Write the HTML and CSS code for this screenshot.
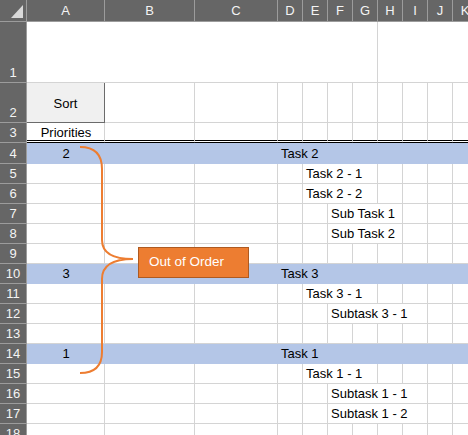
FILE: index.html
```html
<!DOCTYPE html>
<html lang="en">
<head>
  <meta charset="UTF-8" />
  <title>Priorities</title>
  <link rel="stylesheet" href="styles.css">
</head>
<body>
  <div class="sheet">
    <!-- column headers -->
    <div class="c hd corner">
      <svg width="26" height="21" viewBox="0 0 26 21"><polygon points="11,18 23,18 23,5" fill="#d9d9d9"/></svg>
    </div>
    <div class="c hd">A</div>
    <div class="c hd">B</div>
    <div class="c hd">C</div>
    <div class="c hd">D</div>
    <div class="c hd">E</div>
    <div class="c hd">F</div>
    <div class="c hd">G</div>
    <div class="c hd">H</div>
    <div class="c hd">I</div>
    <div class="c hd">J</div>
    <div class="c hd">K</div>

    <!-- row 1 -->
    <div class="c rh">1</div>
    <div class="c span-7"></div>
    <div class="c span-4"></div>

    <!-- row 2 -->
    <div class="c rh">2</div>
    <div class="c btn-cell"><div class="btn">Sort</div></div>
    <div class="c"></div><div class="c"></div><div class="c"></div><div class="c"></div><div class="c"></div>
    <div class="c"></div><div class="c"></div><div class="c"></div><div class="c"></div><div class="c"></div>

    <!-- row 3 -->
    <div class="c rh">3</div>
    <div class="c dbl ctr">Priorities</div>
    <div class="c dbl"></div><div class="c dbl"></div><div class="c dbl"></div><div class="c dbl"></div><div class="c dbl"></div>
    <div class="c dbl"></div><div class="c dbl"></div><div class="c dbl"></div><div class="c dbl"></div><div class="c dbl"></div>

    <!-- row 4 -->
    <div class="c rh">4</div>
    <div class="c band ctr">2</div>
    <div class="c band"></div>
    <div class="c band"></div>
    <div class="c band span-8 task">Task 2</div>

    <!-- row 5 -->
    <div class="c rh">5</div>
    <div class="c"></div><div class="c"></div><div class="c"></div><div class="c"></div>
    <div class="c span-3">Task 2 - 1</div>
    <div class="c"></div><div class="c"></div><div class="c"></div><div class="c"></div>

    <!-- row 6 -->
    <div class="c rh">6</div>
    <div class="c"></div><div class="c"></div><div class="c"></div><div class="c"></div>
    <div class="c span-3">Task 2 - 2</div>
    <div class="c"></div><div class="c"></div><div class="c"></div><div class="c"></div>

    <!-- row 7 -->
    <div class="c rh">7</div>
    <div class="c"></div><div class="c"></div><div class="c"></div><div class="c"></div><div class="c"></div>
    <div class="c span-3">Sub Task 1</div>
    <div class="c"></div><div class="c"></div><div class="c"></div>

    <!-- row 8 -->
    <div class="c rh">8</div>
    <div class="c"></div><div class="c"></div><div class="c"></div><div class="c"></div><div class="c"></div>
    <div class="c span-3">Sub Task 2</div>
    <div class="c"></div><div class="c"></div><div class="c"></div>

    <!-- row 9 -->
    <div class="c rh">9</div>
    <div class="c"></div><div class="c"></div><div class="c"></div><div class="c"></div><div class="c"></div><div class="c"></div>
    <div class="c"></div><div class="c"></div><div class="c"></div><div class="c"></div><div class="c"></div>

    <!-- row 10 -->
    <div class="c rh">10</div>
    <div class="c band ctr">3</div>
    <div class="c band"></div>
    <div class="c band"></div>
    <div class="c band span-8 task">Task 3</div>

    <!-- row 11 -->
    <div class="c rh">11</div>
    <div class="c"></div><div class="c"></div><div class="c"></div><div class="c"></div>
    <div class="c span-3">Task 3 - 1</div>
    <div class="c"></div><div class="c"></div><div class="c"></div><div class="c"></div>

    <!-- row 12 -->
    <div class="c rh">12</div>
    <div class="c"></div><div class="c"></div><div class="c"></div><div class="c"></div><div class="c"></div>
    <div class="c span-4">Subtask 3 - 1</div>
    <div class="c"></div><div class="c"></div>

    <!-- row 13 -->
    <div class="c rh">13</div>
    <div class="c"></div><div class="c"></div><div class="c"></div><div class="c"></div><div class="c"></div><div class="c"></div>
    <div class="c"></div><div class="c"></div><div class="c"></div><div class="c"></div><div class="c"></div>

    <!-- row 14 -->
    <div class="c rh">14</div>
    <div class="c band ctr">1</div>
    <div class="c band"></div>
    <div class="c band"></div>
    <div class="c band span-8 task">Task 1</div>

    <!-- row 15 -->
    <div class="c rh">15</div>
    <div class="c"></div><div class="c"></div><div class="c"></div><div class="c"></div>
    <div class="c span-3">Task 1 - 1</div>
    <div class="c"></div><div class="c"></div><div class="c"></div><div class="c"></div>

    <!-- row 16 -->
    <div class="c rh">16</div>
    <div class="c"></div><div class="c"></div><div class="c"></div><div class="c"></div><div class="c"></div>
    <div class="c span-4">Subtask 1 - 1</div>
    <div class="c"></div><div class="c"></div>

    <!-- row 17 -->
    <div class="c rh">17</div>
    <div class="c"></div><div class="c"></div><div class="c"></div><div class="c"></div><div class="c"></div>
    <div class="c span-4">Subtask 1 - 2</div>
    <div class="c"></div><div class="c"></div>

    <!-- row 18 -->
    <div class="c rh">18</div>
    <div class="c"></div><div class="c"></div><div class="c"></div><div class="c"></div><div class="c"></div><div class="c"></div>
    <div class="c"></div><div class="c"></div><div class="c"></div><div class="c"></div><div class="c"></div>

    <!-- brace + callout drawn over the cells -->
    <svg class="brace" width="468" height="435" viewBox="0 0 468 435">
      <path d="M80 147 Q102 147 102 169 L102 240 Q102 259 133 259 Q102 259 102 279 L102 352 Q102 373 80 373"
            fill="none" stroke="#ed7d31" stroke-width="2"/>
    </svg>
    <div class="callout">Out of Order</div>
  </div>
</body>
</html>
```

FILE: styles.css
```css
body {
  margin: 0;
  overflow: hidden;
  background: #fff;
  font-family: "Liberation Sans", Arial, sans-serif;
  font-size: 13px;
  color: #000;
}
.sheet {
  position: relative;
  display: grid;
  grid-template-columns: 27px 78px 90px 83px repeat(8, 25px);
  grid-template-rows: 22px 61px 40px 20px 21px repeat(14, 20px);
  width: 478px;
}
.c {
  box-sizing: border-box;
  min-width: 0;
  display: flex;
  align-items: flex-end;
  padding: 0 2px 2px 3px;
  border-right: 1px solid #d4d4d4;
  border-bottom: 1px solid #d4d4d4;
  white-space: nowrap;
  line-height: 15px;
}
.hd {
  background: #666;
  color: #f4f4f4;
  border-color: #9c9c9c;
  justify-content: center;
  align-items: center;
  padding: 0;
}
.corner {
  align-items: stretch;
  justify-content: flex-start;
}
.rh {
  background: #666;
  color: #f4f4f4;
  border-color: #9c9c9c;
  justify-content: center;
  padding: 0 0 2px;
}
.ctr {
  justify-content: center;
}
.span-3 { grid-column: span 3; }
.span-4 { grid-column: span 4; }
.span-7 { grid-column: span 7; }
.span-8 { grid-column: span 8; }
.dbl {
  border-bottom: 3px double #000;
  padding-bottom: 0;
}
.band {
  background: #b4c6e7;
  border-color: #b4c6e7;
}
.task {
  padding-left: 3px;
}
.btn-cell {
  padding: 0;
  border: none;
  align-items: stretch;
}
.btn {
  flex: 1;
  display: flex;
  align-items: center;
  justify-content: center;
  background: #f0f0f0;
  border-right: 1px solid #6b6b6b;
  border-bottom: 1px solid #6b6b6b;
  padding-top: 1px;
}
.brace {
  position: absolute;
  left: 0;
  top: 0;
  pointer-events: none;
}
.callout {
  position: absolute;
  left: 138px;
  top: 247px;
  width: 111px;
  height: 31px;
  box-sizing: border-box;
  padding: 0 0 2px 10px;
  display: flex;
  align-items: center;
  background: #ed7d31;
  border: 1px solid #ae5a21;
  color: #fff;
  font-size: 13.5px;
}
```
